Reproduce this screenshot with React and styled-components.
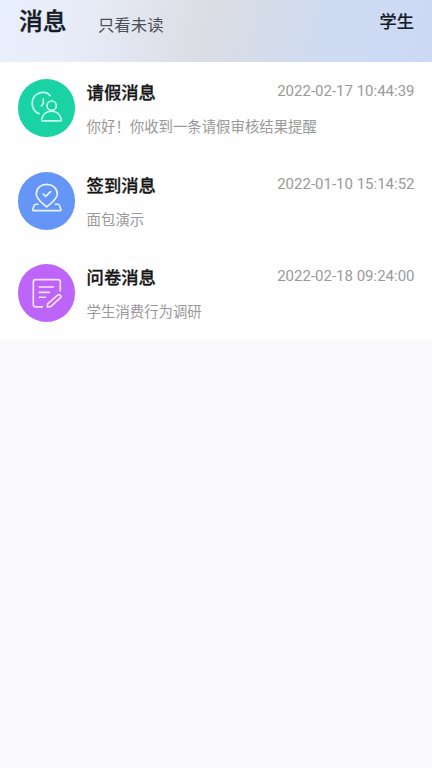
import styled, { createGlobalStyle } from "styled-components";

const GlobalStyle = createGlobalStyle`
  * {
    box-sizing: border-box;
  }

  body {
    margin: 0;
    background: #fafafc;
    font-family: Roboto, "Noto Sans CJK SC", sans-serif;
  }
`;

const Page = styled.div`
  min-height: 100vh;
  background: #fafafc;
`;

const Header = styled.header`
  display: flex;
  align-items: flex-start;
  height: 62px;
  padding: 0 18px 0 19px;
  color: #161c28;
  background: linear-gradient(
    105deg,
    #e8effc 0%,
    #e7ecf8 20%,
    #e0e3ec 36%,
    #dbdde4 48%,
    #d5dce9 60%,
    #cedbf2 76%,
    #cdd9f4 100%
  );
`;

const Title = styled.h1`
  margin: 5px 0 0;
  font-size: 23.8px;
  font-weight: 500;
  line-height: 34px;
  -webkit-text-stroke: 0.4px currentColor;
`;

const UnreadFilter = styled.span`
  margin: 13px 0 0 31.4px;
  font-size: 16.4px;
  line-height: 25px;
  color: #4b4f57;
`;

const Role = styled.span`
  margin: 10px 0 0 auto;
  font-size: 17.2px;
  font-weight: 500;
  line-height: 24px;
  -webkit-text-stroke: 0.2px currentColor;
`;

const List = styled.ul`
  margin: 0;
  padding: 0;
  list-style: none;
  background: #fefefe;
`;

const Message = styled.li`
  display: flex;
  align-items: center;
  gap: 11.5px;
  height: 92.5px;
  padding: 0 17.5px;
`;

const Avatar = styled.div`
  flex: none;
  width: 57.6px;
  height: 57.6px;
  border-radius: 50%;
  background: ${({ $color }) => $color};
`;

const Icon = styled.svg`
  display: block;
  width: 100%;
  height: 100%;
  fill: none;
  stroke: ${({ $stroke }) => $stroke};
  stroke-width: 5;
  stroke-linecap: round;
  stroke-linejoin: round;
`;

const Content = styled.div`
  flex: 1;
  min-width: 0;
  padding-top: 3.2px;
`;

const TopLine = styled.div`
  display: flex;
  justify-content: space-between;
  align-items: flex-start;
`;

const Name = styled.strong`
  font-size: 17.3px;
  font-weight: 500;
  line-height: 26px;
  color: #161616;
  -webkit-text-stroke: 0.3px currentColor;
`;

const Time = styled.time`
  margin-top: -0.4px;
  font-size: 15px;
  line-height: 22px;
  color: #9a9a9a;
`;

const Text = styled.p`
  margin: 10.8px 0 0;
  font-size: 14.4px;
  line-height: 22px;
  color: #999;
`;

const LeaveIcon = () => (
  <Icon viewBox="23 22 173 173" $stroke="#c4fff0">
    <path d="M119 72C111 60 91 59 78 69C62 82 62 106 76 120Q80 124 86 126" />
    <path d="M99 82V96L93 103" />
    <circle cx="124" cy="102" r="14" />
    <path d="M98 148H150Q154 148 153 143C149 127 138 119 124 119C110 119 98 127 94 143Q93 148 98 148Z" />
  </Icon>
);

const SignIcon = () => (
  <Icon viewBox="23 22 173 173" $stroke="#eaf3ff">
    <path d="M109 127C99 117 78 105 78 88C78 70 92 59 109 59C126 59 141 70 141 88C141 105 119 117 109 127Z" />
    <path d="M99 88L106 95L121 81" />
    <path d="M83 119H76Q73 119 72 122L67 134Q66 138 70 138H149Q153 138 152 134L147 122Q146 119 143 119H135" />
  </Icon>
);

const SurveyIcon = () => (
  <Icon viewBox="23 22 173 173" $stroke="#f7e4ff">
    <path d="M96 151H76Q69 151 69 144V76Q69 69 76 69H143Q150 69 150 76V103" />
    <path d="M87 91H129M87 107H117M87 122H105" />
    <path d="M112 142L143 115Q147 112 150 116Q154 120 150 124L121 150L111 151Z" />
  </Icon>
);

const messages = [
  {
    name: "请假消息",
    time: "2022-02-17 10:44:39",
    text: "你好！你收到一条请假审核结果提醒",
    color: "#19d3a5",
    icon: <LeaveIcon />,
  },
  {
    name: "签到消息",
    time: "2022-01-10 15:14:52",
    text: "面包演示",
    color: "#6495f7",
    icon: <SignIcon />,
  },
  {
    name: "问卷消息",
    time: "2022-02-18 09:24:00",
    text: "学生消费行为调研",
    color: "#bd65f8",
    icon: <SurveyIcon />,
  },
];

export default function App() {
  return (
    <Page lang="zh-CN">
      <GlobalStyle />
      <Header>
        <Title>消息</Title>
        <UnreadFilter>只看未读</UnreadFilter>
        <Role>学生</Role>
      </Header>
      <List>
        {messages.map((item) => (
          <Message key={item.name}>
            <Avatar $color={item.color}>{item.icon}</Avatar>
            <Content>
              <TopLine>
                <Name>{item.name}</Name>
                <Time>{item.time}</Time>
              </TopLine>
              <Text>{item.text}</Text>
            </Content>
          </Message>
        ))}
      </List>
    </Page>
  );
}
